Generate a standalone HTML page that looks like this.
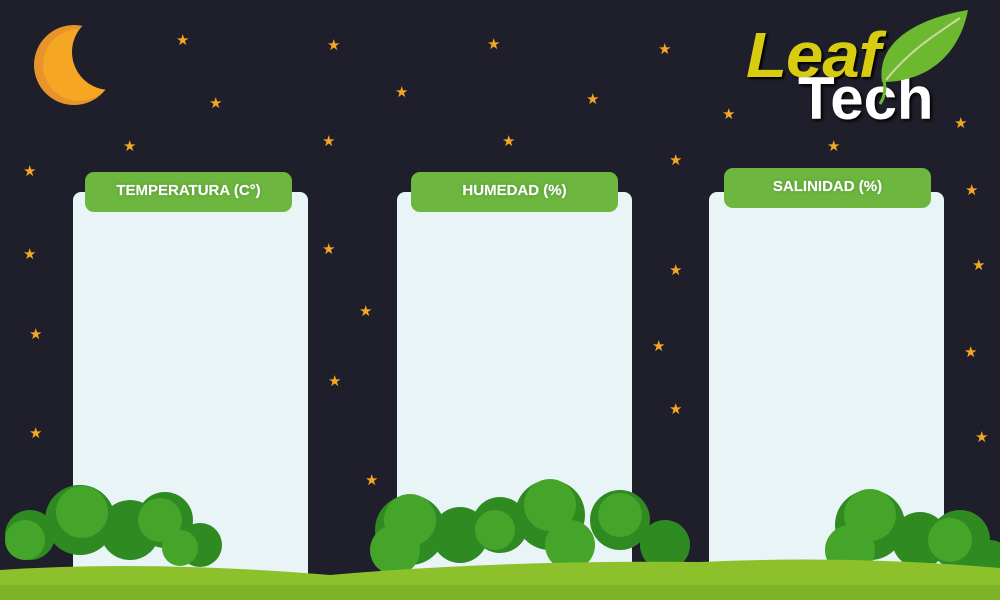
<!DOCTYPE html>
<html><head><style>
body{margin:0;width:1000px;height:600px;overflow:hidden;background:#1f1f2b;position:relative;font-family:"Liberation Sans",sans-serif}
.p{position:absolute;background:#e8f4f5;border-radius:8px;top:192px;height:400px;width:235px}
.t{position:absolute;background:#6db63f;border-radius:9px;height:40px;width:207px;color:#fff;font-weight:bold;font-size:15px;text-align:center;line-height:38px;text-shadow:0 0 3px #4a8a2a,0 0 1px #fff}
.s{position:absolute;color:#f5a623;font-size:15px;line-height:15px}
svg{position:absolute;left:0;top:0}
</style></head><body>
<svg width="1000" height="600">
<circle cx="74" cy="65" r="40" fill="#e8942a"/>
<circle cx="79" cy="65" r="36" fill="#f5a623"/>
<circle cx="110" cy="52" r="38" fill="#1f1f2b"/>
</svg>
<div class="p" style="left:73px"></div>
<div class="p" style="left:397px"></div>
<div class="p" style="left:709px"></div>
<div class="t" style="left:85px;top:172px">TEMPERATURA (C°)</div>
<div class="t" style="left:411px;top:172px">HUMEDAD (%)</div>
<div class="t" style="left:724px;top:168px">SALINIDAD (%)</div>
<div style="position:absolute;left:746px;top:18px;font:italic bold 64px 'Liberation Sans',sans-serif;color:#d8cc10;letter-spacing:-1px;text-shadow:2px 2px 2px #000;transform:scaleX(1.05);transform-origin:left">Leaf</div>
<div style="position:absolute;left:798px;top:64px;font:bold 60px 'Liberation Sans',sans-serif;color:#fff;text-shadow:2px 2px 3px #000">Tech</div>
<svg width="1000" height="600">
<path d="M882 82 C876 40 920 18 968 10 C960 52 930 82 882 82Z" fill="#6cb82f"/>
<path d="M886 80 C910 50 935 35 960 18" stroke="#cdd9a0" stroke-width="2" fill="none"/>
<path d="M884 80 C886 90 884 98 880 104" stroke="#6cb82f" stroke-width="3" fill="none"/>
<g fill="#2f8a22">
<circle cx="30" cy="535" r="25"/><circle cx="80" cy="520" r="35"/><circle cx="130" cy="530" r="30"/><circle cx="165" cy="520" r="28"/><circle cx="200" cy="545" r="22"/>
<circle cx="410" cy="530" r="35"/><circle cx="460" cy="535" r="28"/><circle cx="500" cy="525" r="28"/><circle cx="550" cy="515" r="35"/><circle cx="620" cy="520" r="30"/><circle cx="665" cy="545" r="25"/>
<circle cx="870" cy="525" r="35"/><circle cx="920" cy="540" r="28"/><circle cx="960" cy="540" r="30"/><circle cx="990" cy="560" r="20"/>
</g>
<g fill="#45a52a">
<circle cx="25" cy="540" r="20"/><circle cx="82" cy="512" r="26"/><circle cx="160" cy="520" r="22"/><circle cx="180" cy="548" r="18"/>
<circle cx="410" cy="520" r="26"/><circle cx="395" cy="550" r="25"/><circle cx="495" cy="530" r="20"/><circle cx="550" cy="505" r="26"/><circle cx="620" cy="515" r="22"/><circle cx="570" cy="545" r="25"/>
<circle cx="870" cy="515" r="26"/><circle cx="850" cy="550" r="25"/><circle cx="950" cy="540" r="22"/>
</g>
<path d="M0 570 Q150 560 330 575 Q500 560 700 562 Q850 555 1000 568 L1000 600 L0 600Z" fill="#8cc12c"/>
<rect x="0" y="585" width="1000" height="15" fill="#7db427"/>
</svg>
<div class="s" style="left:176px;top:33px">★</div><div class="s" style="left:327px;top:38px">★</div><div class="s" style="left:487px;top:37px">★</div><div class="s" style="left:658px;top:42px">★</div>
<div class="s" style="left:209px;top:96px">★</div><div class="s" style="left:395px;top:85px">★</div><div class="s" style="left:586px;top:92px">★</div><div class="s" style="left:722px;top:107px">★</div><div class="s" style="left:954px;top:116px">★</div>
<div class="s" style="left:123px;top:139px">★</div><div class="s" style="left:322px;top:134px">★</div><div class="s" style="left:502px;top:134px">★</div><div class="s" style="left:669px;top:153px">★</div><div class="s" style="left:827px;top:139px">★</div>
<div class="s" style="left:23px;top:164px">★</div><div class="s" style="left:965px;top:183px">★</div><div class="s" style="left:23px;top:247px">★</div><div class="s" style="left:322px;top:242px">★</div><div class="s" style="left:669px;top:263px">★</div><div class="s" style="left:972px;top:258px">★</div>
<div class="s" style="left:359px;top:304px">★</div><div class="s" style="left:29px;top:327px">★</div><div class="s" style="left:652px;top:339px">★</div><div class="s" style="left:964px;top:345px">★</div><div class="s" style="left:328px;top:374px">★</div>
<div class="s" style="left:669px;top:402px">★</div><div class="s" style="left:29px;top:426px">★</div><div class="s" style="left:975px;top:430px">★</div><div class="s" style="left:365px;top:473px">★</div>
</body></html>
